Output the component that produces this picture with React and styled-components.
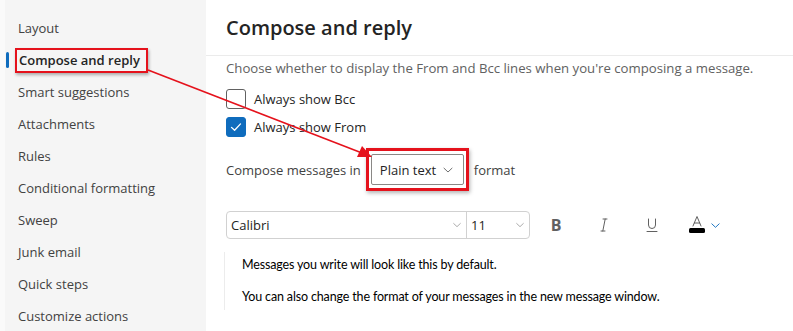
import styled, { createGlobalStyle } from "styled-components";

const GlobalStyle = createGlobalStyle`
	html, body {
		margin: 0;
		padding: 0;
		background: #ffffff;
	}
	body {
		font-family: "Open Sans", "Noto Sans", sans-serif;
		color: #242424;
	}
`;

const navItems = [
	"Layout",
	"Compose and reply",
	"Smart suggestions",
	"Attachments",
	"Rules",
	"Conditional formatting",
	"Sweep",
	"Junk email",
	"Quick steps",
	"Customize actions",
];

const Chevron = ({ size = 10, color = "#616161" }) => (
	<svg width={size} height={size} viewBox="0 0 12 12" fill="none">
		<path d="M2 4.2 L6 8 L10 4.2" stroke={color} strokeWidth="1" strokeLinecap="round" strokeLinejoin="round" />
	</svg>
);

const App = () => {
	return (
		<Page>
			<GlobalStyle />
			<Sidebar>
				{navItems.map((item) => (
					<NavItem key={item} $active={item === "Compose and reply"}>
						{item === "Compose and reply" ? <Marked>{item}</Marked> : item}
					</NavItem>
				))}
			</Sidebar>
			<Main>
				<Header>
					<h1>Compose and reply</h1>
				</Header>
				<Content>
					<Description>
						Choose whether to display the From and Bcc lines when you're composing a message.
					</Description>
					<CheckRow>
						<Box />
						Always show Bcc
					</CheckRow>
					<CheckRow>
						<Box $checked>
							<svg width="14" height="14" viewBox="0 0 14 14" fill="none">
								<path d="M2.5 7.4 L5.6 10.3 L11.5 3.9" stroke="#fff" strokeWidth="1.3" strokeLinecap="round" strokeLinejoin="round" />
							</svg>
						</Box>
						Always show From
					</CheckRow>
					<FormatRow>
						Compose messages in
						<RedFrame>
							<Dropdown>
								Plain text
								<Chevron size={12} color="#707070" />
							</Dropdown>
						</RedFrame>
						format
					</FormatRow>
					<Toolbar>
						<FontSelect>
							<SelectField $width="239px">
								Calibri
								<Chevron size={10} color="#9a9a9a" />
							</SelectField>
							<SelectField $width="63px" $divided>
								11
								<Chevron size={10} color="#9a9a9a" />
							</SelectField>
						</FontSelect>
						<ToolButton $bold>B</ToolButton>
						<ToolButton>
							<svg width="16" height="16" viewBox="0 0 16 16" fill="none">
								<path d="M5 14 H9 M7 2 H11 M9.2 2 L6.8 14" stroke="#616161" strokeWidth="1" strokeLinecap="round" />
							</svg>
						</ToolButton>
						<ToolButton>
							<svg width="16" height="16" viewBox="0 0 16 16" fill="none">
								<path d="M4.5 2 V8 A3.5 3.5 0 0 0 11.5 8 V2 M3 14.5 H13" stroke="#616161" strokeWidth="1" strokeLinecap="round" />
							</svg>
						</ToolButton>
						<ColorButton>
							<svg width="22" height="20" viewBox="0 0 22 20" fill="none">
								<path d="M7 11 L11 1.5 L15 11 M8.3 8 H13.7" stroke="#616161" strokeWidth="1" strokeLinecap="round" strokeLinejoin="round" />
								<rect x="3" y="13" width="16" height="5" rx="1.5" fill="#000" />
							</svg>
							<Chevron size={11} color="#0f6cbd" />
						</ColorButton>
					</Toolbar>
					<Preview>
						<p>Messages you write will look like this by default.</p>
						<p>You can also change the format of your messages in the new message window.</p>
					</Preview>
				</Content>
			</Main>
			<Annotation width="793" height="331" viewBox="0 0 793 331">
				<line x1="148" y1="70" x2="362" y2="153" stroke="#e5121c" strokeWidth="1.6" />
				<polygon points="372,157 357,157 362,146" fill="#e5121c" />
			</Annotation>
		</Page>
	);
};

const Page = styled.div`
	position: relative;
	display: grid;
	grid-template-columns: 206px 1fr;
	width: 793px;
	height: 331px;
	overflow: hidden;
`;

const Sidebar = styled.nav`
	background: #f5f5f5;
	border-left: 5px solid #fafafa;
	padding-top: 12px;
	display: flex;
	flex-direction: column;
`;

const NavItem = styled.div`
	position: relative;
	height: 32px;
	display: flex;
	align-items: center;
	padding-left: 13px;
	font-size: 13px;
	font-weight: ${(p) => (p.$active ? 600 : 400)};
	color: ${(p) => (p.$active ? "#242424" : "#424242")};
	&::before {
		content: "";
		display: ${(p) => (p.$active ? "block" : "none")};
		position: absolute;
		left: 1px;
		top: 8px;
		width: 3px;
		height: 16px;
		border-radius: 2px;
		background: #0f6cbd;
	}
`;

const Marked = styled.span`
	margin-left: -3px;
	padding: 1px 6px 2px 2px;
	border: 2px solid #e5121c;
	box-shadow: 1px 2px 3px rgba(0, 0, 0, 0.3);
`;

const Main = styled.main`
	display: flex;
	flex-direction: column;
	background: #ffffff;
`;

const Header = styled.header`
	height: 55px;
	border-bottom: 1px solid #ebebeb;
	display: flex;
	align-items: center;
	padding-left: 20px;
	h1 {
		margin: 0;
		font-size: 20px;
		font-weight: 600;
		color: #242424;
	}
`;

const Content = styled.section`
	padding-left: 20px;
	display: flex;
	flex-direction: column;
`;

const Description = styled.p`
	margin: 0 0 5px;
	height: 24px;
	line-height: 24px;
	font-size: 13.2px;
	color: #616161;
`;

const CheckRow = styled.label`
	display: flex;
	align-items: center;
	gap: 8px;
	height: 28px;
	font-size: 13px;
	color: #242424;
`;

const Box = styled.span`
	width: 20px;
	height: 20px;
	box-sizing: border-box;
	border-radius: 3px;
	display: flex;
	align-items: center;
	justify-content: center;
	border: 1px solid ${(p) => (p.$checked ? "#0f6cbd" : "#616161")};
	background: ${(p) => (p.$checked ? "#0f6cbd" : "#ffffff")};
`;

const FormatRow = styled.div`
	display: flex;
	align-items: center;
	gap: 5px;
	margin-top: 7px;
	height: 43px;
	font-size: 13px;
	color: #424242;
`;

const RedFrame = styled.span`
	display: flex;
	padding: 3px 2px;
	border: 3px solid #e5121c;
	box-shadow: 1px 2px 4px rgba(0, 0, 0, 0.3);
`;

const Dropdown = styled.span`
	box-sizing: border-box;
	width: 93px;
	height: 31px;
	border: 1px solid #8a8886;
	border-radius: 2px;
	display: flex;
	align-items: center;
	justify-content: space-between;
	padding: 0 9px 0 8px;
	font-size: 13px;
	color: #242424;
`;

const Toolbar = styled.div`
	display: flex;
	align-items: center;
	margin-top: 20px;
	height: 28px;
`;

const FontSelect = styled.div`
	display: flex;
	height: 28px;
	box-sizing: border-box;
	border: 1px solid #d1d1d1;
	border-radius: 4px;
`;

const SelectField = styled.span`
	box-sizing: border-box;
	width: ${(p) => p.$width};
	display: flex;
	align-items: center;
	justify-content: space-between;
	padding: 0 4px 0 4px;
	font-size: 13px;
	color: #242424;
	border-left: ${(p) => (p.$divided ? "1px solid #d1d1d1" : "none")};
`;

const ToolButton = styled.span`
	width: 48px;
	display: flex;
	justify-content: center;
	align-items: center;
	font-size: 16px;
	font-weight: ${(p) => (p.$bold ? 700 : 400)};
	color: #616161;
	&:first-of-type {
		margin-left: 2px;
	}
`;

const ColorButton = styled.span`
	display: flex;
	align-items: center;
	gap: 2px;
	margin-left: 10px;
`;

const Preview = styled.div`
	margin: 13px 0 0 -2px;
	padding: 4px 0 4px 17px;
	border-left: 1px solid #ececec;
	font-family: "Lato", "Liberation Sans", sans-serif;
	font-size: 12.5px;
	letter-spacing: -0.15px;
	color: #000;
	p {
		margin: 0;
		line-height: 18px;
	}
	p + p {
		margin-top: 14px;
	}
`;

const Annotation = styled.svg`
	position: absolute;
	left: 0;
	top: 0;
	pointer-events: none;
`;

export default App;
